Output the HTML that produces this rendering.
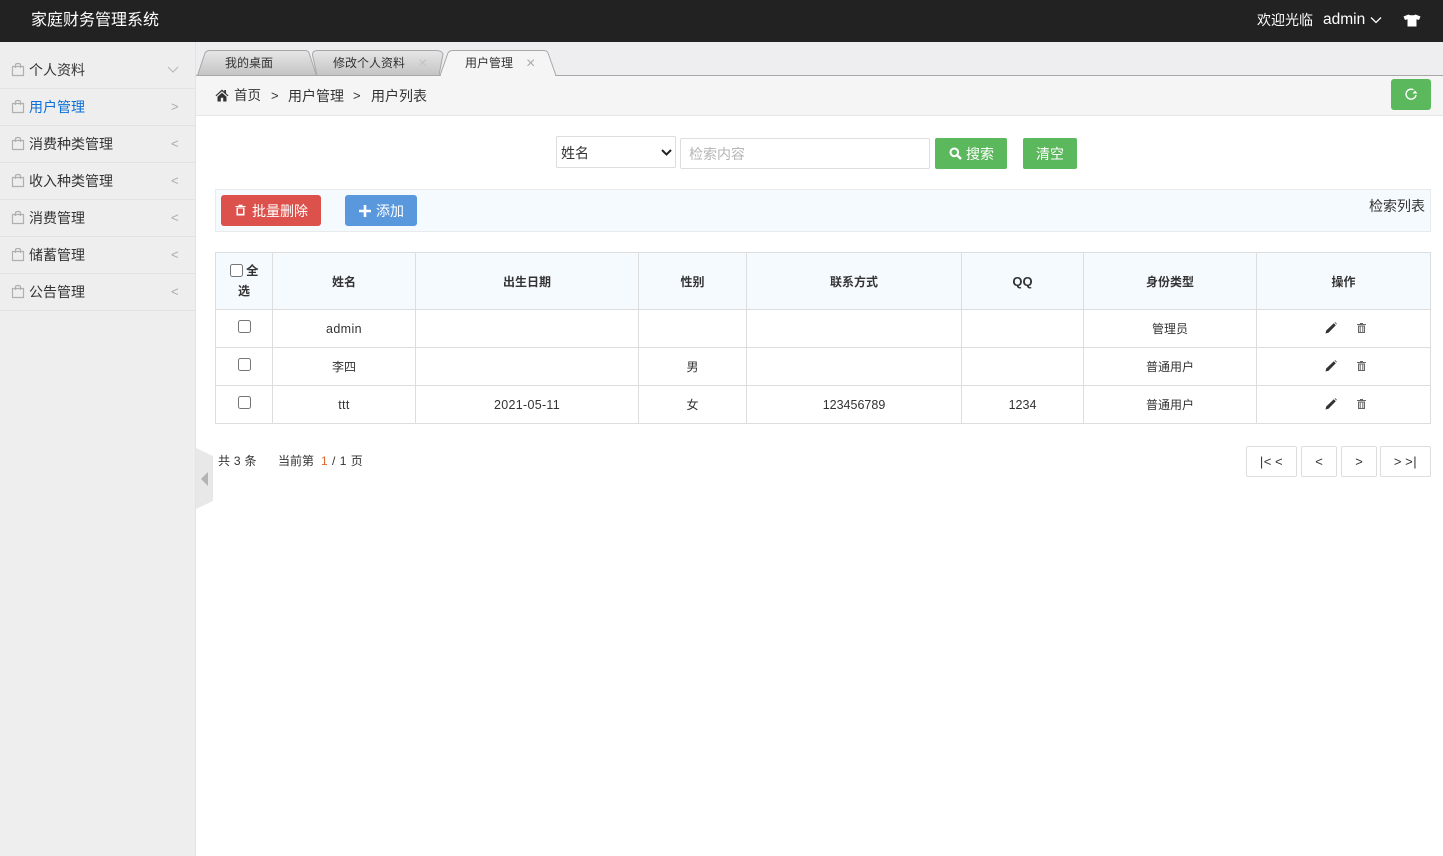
<!DOCTYPE html>
<html lang="zh-CN"><head><meta charset="utf-8"><title>家庭财务管理系统</title>
<style>
*{box-sizing:border-box}
html,body{margin:0;padding:0;width:1443px;height:856px;overflow:hidden;background:#fff}
body{position:relative;font-family:"Liberation Sans","Noto Sans CJK SC",sans-serif;font-size:14px;color:#333}
.a{position:absolute;white-space:nowrap}
.hdr{left:0;top:0;width:1443px;height:42px;background:#222}
.side{left:0;top:42px;width:196px;height:814px;background:#eeeeee;border-right:1px solid #e3e3e3}
.mi{left:0;width:195px;height:37px;border-bottom:1px solid #e2e2e2}
.mi .t{position:absolute;left:29px;top:8px;line-height:20px;font-size:14px;color:#333}
.mi svg{position:absolute;left:11px;top:10px}
.mi .c{position:absolute;left:171px;top:7.500px;line-height:20px;font-size:13px;color:#aaa}
.tabbar{left:196px;top:42px;width:1247px;height:34px;background:#eeeef0;border-bottom:1px solid #a8a8a8}
.bread{left:196px;top:76px;width:1247px;height:40px;background:#f5f5f5;border-bottom:1px solid #e6e6e6}
.t12{font-size:12px;line-height:16px}
.btn{border-radius:2px;color:#fff;text-align:center;font-size:14px}
.line{background:#ddd}
.cell{text-align:center;font-size:12px;line-height:16px;color:#333}
.th{font-weight:bold}
.cb{width:13px;height:13px;border:1px solid #767676;border-radius:2.5px;background:#fff}
.pg{height:31px;top:446px;border:1px solid #ddd;border-radius:2px;background:#fff;text-align:center;line-height:30px;font-size:13px;color:#333}
</style></head><body>
<div class="a hdr"></div>
<div class="a" style="left:31px;top:11px;font-size:16px;line-height:20px;color:#fff">家庭财务管理系统</div>
<div class="a" style="left:1257px;top:10px;font-size:14px;line-height:20px;color:#fff">欢迎光临</div>
<div class="a" style="left:1323px;top:10px;font-size:15.500px;line-height:20px;color:#fff">admin</div>
<svg class="a" style="left:1370px;top:16px" width="12" height="8" viewBox="0 0 12 8"><path d="M1 1.500 6 6.500 11 1.500" fill="none" stroke="#fff" stroke-width="1.300"/></svg>
<svg class="a" style="left:1403px;top:14px" width="18" height="13" viewBox="0 0 18 13"><path d="M5.500 0.500 0.500 2.500 2 6 4.500 5.200V12.500H13.500V5.200L16 6 17.500 2.500 12.500 0.500C11.500 1.500 6.500 1.500 5.500 0.500Z" fill="#fff"/></svg>

<div class="a side"></div>
<div class="a mi" style="top:52px"><svg width="14" height="15" viewBox="0 0 14 15"><path d="M1.500 4.500H12.500V13.500H1.500ZM4.500 6V3C4.500 1 9.500 1 9.500 3V6" fill="none" stroke="#b0b0b0" stroke-width="1.200"/></svg><span class="t">个人资料</span><svg style="left:167px;top:14px" width="12" height="8" viewBox="0 0 12 8"><path d="M1 1 6 6 11 1" fill="none" stroke="#bbb" stroke-width="1.200"/></svg></div>
<div class="a mi" style="top:89px"><svg width="14" height="15" viewBox="0 0 14 15"><path d="M1.500 4.500H12.500V13.500H1.500ZM4.500 6V3C4.500 1 9.500 1 9.500 3V6" fill="none" stroke="#b0b0b0" stroke-width="1.200"/></svg><span class="t" style="color:#0a6fd8">用户管理</span><span class="c">&gt;</span></div>
<div class="a mi" style="top:126px"><svg width="14" height="15" viewBox="0 0 14 15"><path d="M1.500 4.500H12.500V13.500H1.500ZM4.500 6V3C4.500 1 9.500 1 9.500 3V6" fill="none" stroke="#b0b0b0" stroke-width="1.200"/></svg><span class="t">消费种类管理</span><span class="c">&lt;</span></div>
<div class="a mi" style="top:163px"><svg width="14" height="15" viewBox="0 0 14 15"><path d="M1.500 4.500H12.500V13.500H1.500ZM4.500 6V3C4.500 1 9.500 1 9.500 3V6" fill="none" stroke="#b0b0b0" stroke-width="1.200"/></svg><span class="t">收入种类管理</span><span class="c">&lt;</span></div>
<div class="a mi" style="top:200px"><svg width="14" height="15" viewBox="0 0 14 15"><path d="M1.500 4.500H12.500V13.500H1.500ZM4.500 6V3C4.500 1 9.500 1 9.500 3V6" fill="none" stroke="#b0b0b0" stroke-width="1.200"/></svg><span class="t">消费管理</span><span class="c">&lt;</span></div>
<div class="a mi" style="top:237px"><svg width="14" height="15" viewBox="0 0 14 15"><path d="M1.500 4.500H12.500V13.500H1.500ZM4.500 6V3C4.500 1 9.500 1 9.500 3V6" fill="none" stroke="#b0b0b0" stroke-width="1.200"/></svg><span class="t">储蓄管理</span><span class="c">&lt;</span></div>
<div class="a mi" style="top:274px"><svg width="14" height="15" viewBox="0 0 14 15"><path d="M1.500 4.500H12.500V13.500H1.500ZM4.500 6V3C4.500 1 9.500 1 9.500 3V6" fill="none" stroke="#b0b0b0" stroke-width="1.200"/></svg><span class="t">公告管理</span><span class="c">&lt;</span></div>

<div class="a tabbar"></div>
<svg class="a" style="left:196px;top:42px" width="370" height="35" viewBox="0 0 370 35">
<defs><linearGradient id="g" x1="0" y1="0" x2="0" y2="1"><stop offset="0" stop-color="#e6e6e6"/><stop offset="1" stop-color="#c4c4c4"/></linearGradient></defs>
<path d="M1.500 33.500 9 11Q10.500 8.500 14 8.500H109Q112 8.500 113 11L120.500 33.500Z" fill="url(#g)" stroke="#a8a8a8"/>
<path d="M121 33.500 116.500 13Q116.500 8.500 121 8.500H240Q246 8.500 247 12L243 33.500Z" fill="url(#g)" stroke="#a8a8a8"/>
<path d="M244 33.500 252 11Q253.500 8.500 257 8.500H347Q351 8.500 352 11L360 33.500H370" fill="#f5f5f5" stroke="#a8a8a8"/>
<path d="M245 33H359V36H245Z" fill="#f5f5f5"/>
</svg>
<div class="a t12" style="left:225px;top:55px;color:#333">我的桌面</div>
<div class="a t12" style="left:333px;top:55px;color:#333">修改个人资料</div>
<div class="a" style="left:418px;top:55px;font-size:16px;line-height:18px;color:#c4c4c4">×</div>
<div class="a t12" style="left:465px;top:55px;color:#333">用户管理</div>
<div class="a" style="left:526px;top:55px;font-size:16px;line-height:18px;color:#aaa">×</div>

<div class="a bread"></div>
<svg class="a" style="left:215px;top:89px" width="14" height="13" viewBox="0 0 14 13"><path d="M7 0.500 0.500 6.500 1.300 7.300 7 2.200 12.700 7.300 13.500 6.500 11 4.200V1H9.300V2.600ZM2.500 7.800V12.500H5.800V8.800H8.200V12.500H11.500V7.800L7 3.700Z" fill="#333"/></svg>
<div class="a" style="left:234px;top:87px;font-size:13.500px;line-height:18px">首页</div>
<div class="a" style="left:271px;top:87px;font-size:13px;line-height:18px">&gt;</div>
<div class="a" style="left:288px;top:87px;font-size:14px;line-height:18px">用户管理</div>
<div class="a" style="left:353px;top:87px;font-size:13px;line-height:18px">&gt;</div>
<div class="a" style="left:371px;top:87px;font-size:14px;line-height:18px">用户列表</div>
<div class="a btn" style="left:1391px;top:79px;width:40px;height:31px;background:#5cb85c;border-radius:3px"></div>
<svg class="a" style="left:1404px;top:87px" width="14" height="14" viewBox="0 0 14 14"><path d="M12 8A5 5 0 1 1 9.500 2.800" fill="none" stroke="#fff" stroke-width="1.400"/><path d="M8.500 6.500H13.500L11 3.500Z" fill="#fff"/></svg>

<div class="a" style="left:556px;top:136px;width:120px;height:32px;border:1px solid #ddd;border-radius:2px;background:#fff;font-size:14px;line-height:32px;padding-left:4px">姓名</div>
<svg class="a" style="left:661px;top:149px" width="11" height="7" viewBox="0 0 11 7"><path d="M1 1 5.500 5.500 10 1" fill="none" stroke="#222" stroke-width="2"/></svg>
<div class="a" style="left:680px;top:138px;width:250px;height:31px;border:1px solid #ddd;border-radius:2px;background:#fff;font-size:14px;line-height:31px;padding-left:8px;color:#b5b5b5"><span style="position:relative;top:0">检索内容</span></div>
<div class="a btn" style="left:935px;top:138px;width:72px;height:31px;background:#5cb85c;line-height:33px;text-align:left;padding-left:31px">搜索</div>
<svg class="a" style="left:949px;top:147px" width="13" height="13" viewBox="0 0 13 13"><circle cx="5.300" cy="5.300" r="3.800" fill="none" stroke="#fff" stroke-width="2"/><path d="M8 8 12 12" stroke="#fff" stroke-width="2.400"/></svg>
<div class="a btn" style="left:1023px;top:138px;width:54px;height:31px;background:#5cb85c;line-height:33px">清空</div>

<div class="a" style="left:215px;top:189px;width:1216px;height:43px;background:#f5faff;border:1px solid #e8eaec"></div>
<div class="a btn" style="left:221px;top:195px;width:100px;height:31px;background:#dd514c;border-radius:3px;line-height:33px;text-align:left;padding-left:31px">批量删除</div>
<svg class="a" style="left:235px;top:204px" width="11" height="12" viewBox="0 0 11 12"><path d="M0.500 2H10.500V3H0.500ZM3.500 2V0.700H7.500V2ZM1.500 3.500H9.500V11.500H1.500ZM3 4.500V9.800H8V4.500Z" fill="#fff" fill-rule="evenodd"/></svg>
<div class="a btn" style="left:345px;top:195px;width:72px;height:31px;background:#5a98de;border-radius:3px;line-height:33px;text-align:left;padding-left:31px">添加</div>
<svg class="a" style="left:359px;top:205px" width="12" height="12" viewBox="0 0 12 12"><path d="M4.700 0H7.300V4.700H12V7.300H7.300V12H4.700V7.300H0V4.700H4.700Z" fill="#fff"/></svg>
<div class="a" style="left:1369px;top:197px;font-size:14px;line-height:18px">检索列表</div>

<!-- table -->
<div class="a" style="left:215px;top:252px;width:1216px;height:58px;background:#f5faff"></div>
<div class="a line" style="left:215px;top:252px;width:1216px;height:1px"></div>
<div class="a line" style="left:215px;top:309px;width:1216px;height:1px"></div>
<div class="a line" style="left:215px;top:347px;width:1216px;height:1px"></div>
<div class="a line" style="left:215px;top:385px;width:1216px;height:1px"></div>
<div class="a line" style="left:215px;top:423px;width:1216px;height:1px"></div>
<div class="a line" style="left:215px;top:252px;width:1px;height:172px"></div>
<div class="a line" style="left:272px;top:252px;width:1px;height:172px"></div>
<div class="a line" style="left:415px;top:252px;width:1px;height:172px"></div>
<div class="a line" style="left:638px;top:252px;width:1px;height:172px"></div>
<div class="a line" style="left:746px;top:252px;width:1px;height:172px"></div>
<div class="a line" style="left:961px;top:252px;width:1px;height:172px"></div>
<div class="a line" style="left:1083px;top:252px;width:1px;height:172px"></div>
<div class="a line" style="left:1256px;top:252px;width:1px;height:172px"></div>
<div class="a line" style="left:1430px;top:252px;width:1px;height:172px"></div>

<div class="a cb" style="left:230px;top:264px"></div>
<div class="a cell th" style="left:246px;top:263px;font-size:12.500px">全</div>
<div class="a cell th" style="left:238px;top:283px">选</div>
<div class="a cell th" style="left:273px;width:142px;top:273.500px">姓名</div>
<div class="a cell th" style="left:416px;width:222px;top:273.500px">出生日期</div>
<div class="a cell th" style="left:639px;width:107px;top:273.500px">性别</div>
<div class="a cell th" style="left:747px;width:214px;top:273.500px">联系方式</div>
<div class="a cell th" style="left:962px;width:121px;top:274px;font-size:13px">QQ</div>
<div class="a cell th" style="left:1084px;width:172px;top:273.500px">身份类型</div>
<div class="a cell th" style="left:1257px;width:173px;top:273.500px">操作</div>

<div class="a cb" style="left:238px;top:320px"></div>
<div class="a cb" style="left:238px;top:358px"></div>
<div class="a cb" style="left:238px;top:396px"></div>
<div class="a cell" style="left:273px;width:142px;top:320.500px;font-size:12.500px;letter-spacing:.4px">admin</div>
<div class="a cell" style="left:273px;width:142px;top:358.500px">李四</div>
<div class="a cell" style="left:273px;width:142px;top:396.500px;font-size:12.500px;letter-spacing:.4px">ttt</div>
<div class="a cell" style="left:416px;width:222px;top:396.500px;font-size:12.500px;letter-spacing:.3px">2021-05-11</div>
<div class="a cell" style="left:639px;width:107px;top:358.500px">男</div>
<div class="a cell" style="left:639px;width:107px;top:396.500px">女</div>
<div class="a cell" style="left:747px;width:214px;top:396.500px;font-size:12.500px">123456789</div>
<div class="a cell" style="left:962px;width:121px;top:396.500px;font-size:12.500px">1234</div>
<div class="a cell" style="left:1084px;width:172px;top:320.500px">管理员</div>
<div class="a cell" style="left:1084px;width:172px;top:358.500px">普通用户</div>
<div class="a cell" style="left:1084px;width:172px;top:396.500px">普通用户</div>

<svg class="a" style="left:1325px;top:322px" width="12" height="12" viewBox="0 0 12 12"><path d="M0.500 11.500 1.200 8.500 8.800 1.200 10.800 3.200 3.500 10.800ZM9.500 0.500 10.300 0.200 11.800 1.700 11.500 2.500Z" fill="#333"/></svg>
<svg class="a" style="left:1356px;top:322px" width="11" height="12" viewBox="0 0 11 12"><path d="M1 2H10V3H1ZM4 2V1H7V2ZM2 3.500H9V11H2ZM3.300 4.500V10H4.300V4.500ZM5 4.500V10H6V4.500ZM6.700 4.500V10H7.700V4.500Z" fill="#666" fill-rule="evenodd"/></svg>
<svg class="a" style="left:1325px;top:360px" width="12" height="12" viewBox="0 0 12 12"><path d="M0.500 11.500 1.200 8.500 8.800 1.200 10.800 3.200 3.500 10.800ZM9.500 0.500 10.300 0.200 11.800 1.700 11.500 2.500Z" fill="#333"/></svg>
<svg class="a" style="left:1356px;top:360px" width="11" height="12" viewBox="0 0 11 12"><path d="M1 2H10V3H1ZM4 2V1H7V2ZM2 3.500H9V11H2ZM3.300 4.500V10H4.300V4.500ZM5 4.500V10H6V4.500ZM6.700 4.500V10H7.700V4.500Z" fill="#666" fill-rule="evenodd"/></svg>
<svg class="a" style="left:1325px;top:398px" width="12" height="12" viewBox="0 0 12 12"><path d="M0.500 11.500 1.200 8.500 8.800 1.200 10.800 3.200 3.500 10.800ZM9.500 0.500 10.300 0.200 11.800 1.700 11.500 2.500Z" fill="#333"/></svg>
<svg class="a" style="left:1356px;top:398px" width="11" height="12" viewBox="0 0 11 12"><path d="M1 2H10V3H1ZM4 2V1H7V2ZM2 3.500H9V11H2ZM3.300 4.500V10H4.300V4.500ZM5 4.500V10H6V4.500ZM6.700 4.500V10H7.700V4.500Z" fill="#666" fill-rule="evenodd"/></svg>

<svg class="a" style="left:196px;top:448px" width="18" height="62" viewBox="0 0 18 62"><path d="M0 0 17 8V53L0 61Z" fill="#e8e8e8"/><path d="M5 31 12 24V38Z" fill="#b4b4b4"/></svg>
<div class="a" style="left:218px;top:453px;font-size:12px;line-height:16px;letter-spacing:.3px">共 3 条</div>
<div class="a" style="left:278px;top:453px;font-size:12px;line-height:16px">当前第</div>
<div class="a" style="left:321px;top:453px;font-size:12px;line-height:16px;letter-spacing:.5px"><span style="color:#e0662c">1</span> / 1 页</div>

<div class="a pg" style="left:1246px;width:51px;letter-spacing:.5px">|&lt;&thinsp;&lt;</div>
<div class="a pg" style="left:1301px;width:36px">&lt;</div>
<div class="a pg" style="left:1341px;width:36px">&gt;</div>
<div class="a pg" style="left:1380px;width:51px;letter-spacing:.5px">&gt;&thinsp;&gt;|</div>
</body></html>
